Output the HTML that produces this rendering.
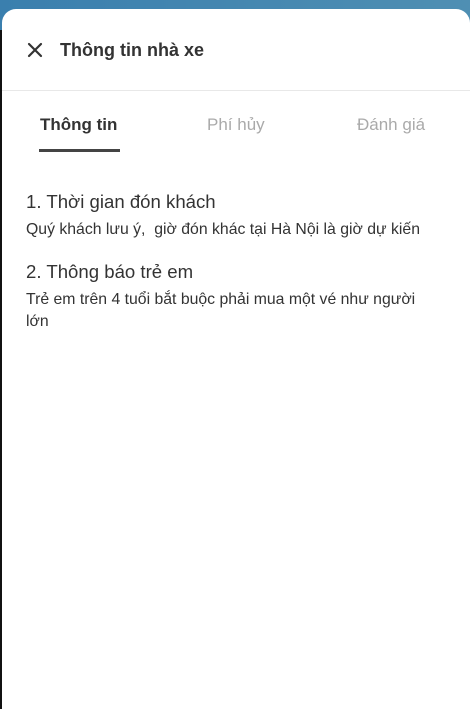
<!DOCTYPE html>
<html><head><meta charset="utf-8"><style>
html,body{margin:0;padding:0}
body{width:470px;height:705px;overflow:hidden;background:#111;position:relative;font-family:"Liberation Sans",sans-serif}
.top{position:absolute;left:0;top:0;width:470px;height:30px;background:linear-gradient(90deg,#3a7fae,#4f8fb3)}
.card{position:absolute;left:2px;top:9px;width:468px;height:700px;background:#fff;border-radius:14px 14px 0 0}
.t{position:absolute;white-space:nowrap}
</style></head><body>
<div class="top"></div>
<div class="card"></div>
<svg style="position:absolute;left:27px;top:42px" width="16" height="16" viewBox="0 0 16 16"><path d="M2 2L14 14M14 2L2 14" stroke="#333" stroke-width="2.2" stroke-linecap="round"/></svg>
<div class="t" style="left:60px;top:40px;font-size:18px;color:#333;font-weight:bold">Thông tin nhà xe</div>
<div style="position:absolute;left:2px;top:90px;width:468px;height:1px;background:#e8e8e8"></div>
<div class="t" style="left:40px;top:115px;font-size:17px;color:#333;font-weight:bold">Thông tin</div>
<div class="t" style="left:207px;top:115px;font-size:17px;color:#aaa">Phí hủy</div>
<div class="t" style="left:357px;top:115px;font-size:17px;color:#aaa">Đánh giá</div>
<div style="position:absolute;left:39px;top:149px;width:81px;height:3px;background:#444"></div>
<div class="t" style="left:26px;top:191px;font-size:18.6px;color:#333">1. Thời gian đón khách</div>
<div class="t" style="left:26px;top:221px;font-size:15.8px;color:#333">Quý khách lưu ý,&nbsp; giờ đón khác tại Hà Nội là giờ dự kiến</div>
<div class="t" style="left:26px;top:261px;font-size:18.6px;color:#333">2. Thông báo trẻ em</div>
<div class="t" style="left:26px;top:291px;font-size:15.8px;color:#333">Trẻ em trên 4 tuổi bắt buộc phải mua một vé như người</div>
<div class="t" style="left:26px;top:313px;font-size:15.8px;color:#333">lớn</div>
</body></html>
